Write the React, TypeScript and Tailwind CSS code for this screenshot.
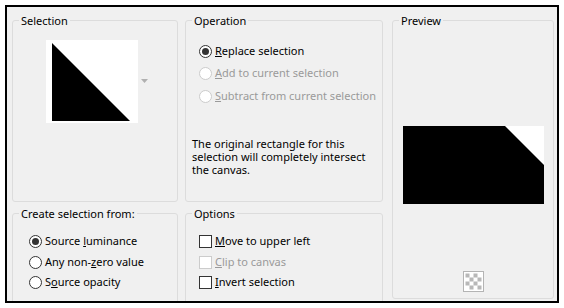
import React from "react";

const font = { fontFamily: '"Noto Sans", "Open Sans", sans-serif' };

function Radio({ checked, disabled }: { checked?: boolean; disabled?: boolean }) {
  return (
    <span
      className={`flex h-[13px] w-[13px] items-center justify-center rounded-full border bg-white ${
        disabled ? "border-[#cccccc]" : "border-[#333333]"
      }`}
    >
      {checked && <span className="h-[7px] w-[7px] rounded-full bg-[#333333]" />}
    </span>
  );
}

function Check({ disabled }: { disabled?: boolean }) {
  return (
    <span
      className={`block h-[13px] w-[13px] border bg-white ${
        disabled ? "border-[#cccccc]" : "border-[#333333]"
      }`}
    />
  );
}

function Legend({ children }: { children: React.ReactNode }) {
  return (
    <legend className="ml-[6px] px-[2px] text-[11px] leading-[15px] text-[#000]">{children}</legend>
  );
}

export default function App() {
  return (
    <div className="h-[308px] w-[564px] bg-white p-[5px]" style={font}>
      <div className="h-[298px] w-[554px] overflow-hidden border-2 border-black bg-[#f0f0f0]">
        <div className="flex pl-[5px] pt-[6px] text-[11px] text-black">
          {/* Column 1 */}
          <div className="flex w-[166px] flex-col">
            <fieldset className="h-[189px] rounded-[3px] border border-[#dcdcdc]">
              <Legend>Selection</Legend>
              <div className="flex items-center pl-[33px] pt-[12px]">
                <svg width="92" height="83" viewBox="0 0 92 83" className="block">
                  <rect width="92" height="83" fill="#fff" />
                  <polygon points="6,3 6,81 84,81" fill="#000" />
                </svg>
                <svg width="7" height="4" viewBox="0 0 7 4" className="ml-[3px] mb-[2px]">
                  <polygon points="0,0 7,0 3.5,4" fill="#b0b0b0" />
                </svg>
              </div>
            </fieldset>
            <fieldset className="mt-[4px] h-[110px] rounded-[3px] border border-[#dcdcdc]">
              <Legend>Create selection from:</Legend>
              <div className="flex flex-col pl-[16px] pt-[10px]">
                <div className="flex h-[21px] items-center gap-[3px]">
                  <Radio checked />
                  <span>
                    Source <u>l</u>uminance
                  </span>
                </div>
                <div className="flex h-[20px] items-center gap-[3px]">
                  <Radio />
                  <span>
                    Any non-<u>z</u>ero value
                  </span>
                </div>
                <div className="flex h-[21px] items-center gap-[3px]">
                  <Radio />
                  <span>
                    S<u>o</u>urce opacity
                  </span>
                </div>
              </div>
            </fieldset>
          </div>

          {/* Column 2 */}
          <div className="ml-[7px] flex w-[198px] flex-col">
            <fieldset className="h-[189px] rounded-[3px] border border-[#dcdcdc]">
              <Legend>Operation</Legend>
              <div className="flex flex-col pl-[13px] pt-[12px]">
                <div className="flex h-[22px] items-center gap-[3px]">
                  <Radio checked />
                  <span>
                    <u>R</u>eplace selection
                  </span>
                </div>
                <div className="flex h-[23px] items-center gap-[3px] text-[#9a9a9a]">
                  <Radio disabled />
                  <span>
                    <u>A</u>dd to current selection
                  </span>
                </div>
                <div className="flex h-[22px] items-center gap-[3px] text-[#9a9a9a]">
                  <Radio disabled />
                  <span>
                    <u>S</u>ubtract from current selection
                  </span>
                </div>
              </div>
              <p className="pl-[6px] pt-[30px] text-[11px] leading-[13px]">
                The original rectangle for this
                <br />
                selection will completely intersect
                <br />
                the canvas.
              </p>
            </fieldset>
            <fieldset className="mt-[4px] h-[110px] rounded-[3px] border border-[#dcdcdc]">
              <Legend>Options</Legend>
              <div className="flex flex-col pl-[13px] pt-[10px]">
                <div className="flex h-[21px] items-center gap-[3px]">
                  <Check />
                  <span>
                    <u>M</u>ove to upper left
                  </span>
                </div>
                <div className="flex h-[20px] items-center gap-[3px] text-[#9a9a9a]">
                  <Check disabled />
                  <span>
                    <u>C</u>lip to canvas
                  </span>
                </div>
                <div className="flex h-[21px] items-center gap-[3px]">
                  <Check />
                  <span>
                    <u>I</u>nvert selection
                  </span>
                </div>
              </div>
            </fieldset>
          </div>

          {/* Column 3 */}
          <div className="ml-[9px] flex w-[162px] flex-col">
            <fieldset className="h-[286px] rounded-[3px] border border-[#dcdcdc]">
              <Legend>Preview</Legend>
              <div className="flex flex-col items-center pt-[98px]">
                <svg width="141" height="78" viewBox="0 0 141 78" className="block">
                  <rect width="141" height="78" fill="#fff" />
                  <polygon points="0,0 102,0 141,39 141,78 0,78" fill="#000" />
                </svg>
                <svg width="21" height="21" viewBox="0 0 21 21" className="mt-[67px] block">
                  <rect x="0.5" y="0.5" width="20" height="20" fill="#fff" stroke="#b4b4b4" />
                  {[0, 1, 2, 3].map((r) =>
                    [0, 1, 2, 3].map((c) =>
                      (r + c) % 2 === 0 ? (
                        <rect key={`${r}-${c}`} x={2.5 + c * 4} y={2.5 + r * 4} width="4" height="4" fill="#b8b8b8" />
                      ) : null
                    )
                  )}
                </svg>
              </div>
            </fieldset>
          </div>
        </div>
      </div>
    </div>
  );
}
